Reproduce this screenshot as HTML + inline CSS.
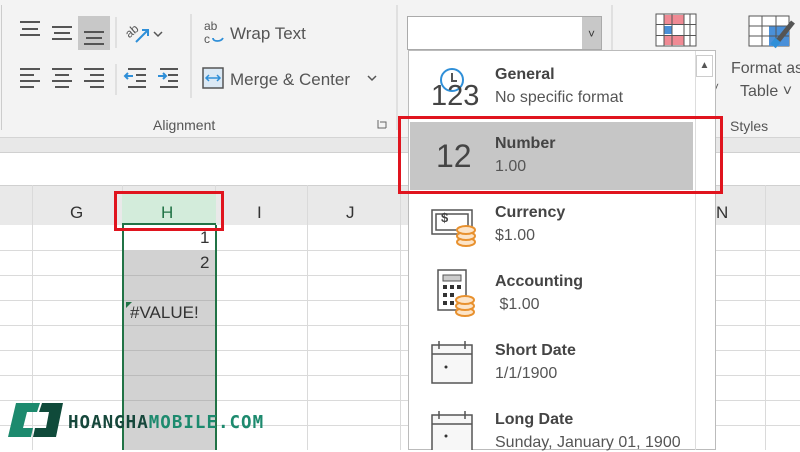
<!DOCTYPE html>
<html><head><meta charset="utf-8"><style>
*{margin:0;padding:0;box-sizing:border-box}
body{width:800px;height:450px;overflow:hidden;position:relative;background:#fff;font-family:"Liberation Sans",sans-serif;color:#333}
.a{position:absolute}
.ic{stroke:#555;stroke-width:2;fill:none}
.hl{position:absolute;height:1px;background:#dadada;left:0;width:800px}
.vl{position:absolute;width:1px;background:#dadada;top:185px;height:265px}
.it{position:absolute;left:495px;font-size:16px;color:#555}
.it b{display:block;color:#444;font-size:16px;margin-bottom:5px}
</style></head><body>
<!-- ribbon -->
<div class="a" style="left:0;top:0;width:800px;height:137px;background:#f3f3f3"></div>
<div class="a" style="left:0;top:137px;width:800px;height:1px;background:#d4d4d4"></div>
<div class="a" style="left:0;top:138px;width:800px;height:14px;background:#e8e8e8"></div>
<div class="a" style="left:0;top:152px;width:800px;height:1px;background:#d0d0d0"></div>
<div class="a" style="left:0;top:185px;width:800px;height:40px;background:#e9e9e9;border-top:1px solid #d0d0d0"></div>
<div class="a" style="left:1px;top:5px;width:1px;height:125px;background:#ccc"></div>
<!-- alignment icons -->
<div class="a" style="left:78px;top:16px;width:32px;height:34px;background:#c8c8c8"></div>
<svg class="a" style="left:0;top:0" width="400" height="137">
<g class="ic">
<path d="M20 22h20M22 29h16M20 35h20"/>
<path d="M52 27h20M54 33h16M52 39h20"/>
<path d="M84 32h20M86 38h16M84 44h20"/>
<path d="M20 69h20M20 75h14M20 81h20M20 87h14"/>
<path d="M52 69h20M55 75h14M52 81h20M55 87h14"/>
<path d="M84 69h20M90 75h14M84 81h20M90 87h14"/>
<path d="M128 69h18M136 75h10M136 81h10M128 87h18"/>
<path d="M160 69h18M168 75h10M168 81h10M160 87h18"/>
<path d="M154 32l4 4 4-4" stroke-width="1.5"/>
<path d="M368 76l4 4 4-4" stroke-width="1.5"/>
</g>
<path d="M125 76h8M128 73l-3 3 3 3" stroke="#2f8fd8" stroke-width="2" fill="none"/>
<path d="M158 76h8M163 73l3 3-3 3" stroke="#2f8fd8" stroke-width="2" fill="none"/>
<path d="M136 42l12-12M142 30h6v6" stroke="#2f8fd8" stroke-width="2" fill="none"/>
<text x="124" y="36" font-size="12" fill="#555" transform="rotate(-40 130 30)">ab</text>
<line x1="116" y1="17" x2="116" y2="48" stroke="#ccc"/>
<line x1="116" y1="64" x2="116" y2="95" stroke="#ccc"/>
<line x1="191" y1="14" x2="191" y2="98" stroke="#ccc"/>
<line x1="397" y1="5" x2="397" y2="130" stroke="#ccc"/>
<text x="204" y="30" font-size="12" fill="#555">ab</text>
<text x="204" y="43" font-size="12" fill="#555">c</text>
<path d="M213 38c0 4 8 4 10 0" stroke="#2f8fd8" stroke-width="1.8" fill="none"/>
<rect x="203" y="68" width="20" height="20" fill="#dbe9f5" stroke="#555" stroke-width="1.5"/>
<path d="M206 78h14M209 75l-3 3 3 3M217 75l3 3-3 3" stroke="#2f8fd8" stroke-width="1.5" fill="none"/>
<path d="M380 122h6v6M378 120v8h8" stroke="#666" fill="none"/>
</svg>
<div class="a" style="left:230px;top:24px;font-size:17px;color:#555">Wrap Text</div>
<div class="a" style="left:230px;top:70px;font-size:17px;color:#555">Merge &amp; Center</div>
<div class="a" style="left:153px;top:117px;font-size:14px;color:#555">Alignment</div>
<!-- right ribbon -->
<svg class="a" style="left:600px;top:0" width="200" height="137">
<line x1="12" y1="5" x2="12" y2="110" stroke="#ccc"/>
<g transform="translate(56,14)">
<rect x="0" y="0" width="40" height="32" fill="#fff" stroke="#555"/>
<rect x="8" y="1" width="20" height="9" fill="#f08a94"/><rect x="8" y="12" width="8" height="8" fill="#4a90d9"/><rect x="8" y="22" width="20" height="9" fill="#f08a94"/>
<path d="M0 10.5h40M0 21.5h40M8 0v32M28 0v32M34 0v32M16 0v32" stroke="#555" stroke-width="1"/>
</g>
<g transform="translate(149,16)">
<rect x="0" y="0" width="40" height="30" fill="#fff" stroke="#555"/>
<rect x="20" y="10" width="20" height="20" fill="#4a90d9"/>
<path d="M0 10h40M0 20h40M13 0v30M27 0v30" stroke="#555"/>
<path d="M44 6L28 26" stroke="#555" stroke-width="5"/><path d="M24 30l5-6" stroke="#2f8fd8" stroke-width="7"/>
</g>
</svg>
<div class="a" style="left:731px;top:60px;font-size:16px;color:#555;white-space:nowrap">Format as</div>
<div class="a" style="left:740px;top:83px;font-size:16px;color:#555">Table ˅</div>
<div class="a" style="left:730px;top:118px;font-size:14px;color:#555">Styles</div>
<div class="a" style="left:712px;top:80px;font-size:12px;color:#555">˅</div>
<!-- grid -->
<div class="hl" style="top:250px"></div><div class="hl" style="top:275px"></div><div class="hl" style="top:300px"></div><div class="hl" style="top:325px"></div><div class="hl" style="top:350px"></div><div class="hl" style="top:375px"></div><div class="hl" style="top:400px"></div><div class="hl" style="top:425px"></div>
<div class="vl" style="left:32px"></div><div class="vl" style="left:122px"></div><div class="vl" style="left:215px"></div><div class="vl" style="left:307px"></div><div class="vl" style="left:400px"></div><div class="vl" style="left:765px"></div>
<div class="a" style="left:122px;top:250px;width:94px;height:200px;background:#d2d2d2"></div>
<div class="hl" style="top:275px;left:122px;width:94px;background:#bbb"></div><div class="hl" style="top:300px;left:122px;width:94px;background:#bbb"></div><div class="hl" style="top:325px;left:122px;width:94px;background:#bbb"></div><div class="hl" style="top:350px;left:122px;width:94px;background:#bbb"></div><div class="hl" style="top:375px;left:122px;width:94px;background:#bbb"></div><div class="hl" style="top:400px;left:122px;width:94px;background:#bbb"></div>
<div class="a" style="left:122px;top:193px;width:94px;height:32px;background:#d3ecdb;border-bottom:2px solid #217346"></div>
<div class="a" style="left:122px;top:225px;width:95px;height:225px;border-left:2px solid #217346;border-right:2px solid #217346"></div>
<div class="a" style="left:126px;top:302px;width:0;height:0;border-top:6px solid #217346;border-right:6px solid transparent"></div>
<div class="a" style="left:70px;top:203px;font-size:17px">G</div>
<div class="a" style="left:161px;top:203px;font-size:17px;color:#217346">H</div>
<div class="a" style="left:257px;top:203px;font-size:17px">I</div>
<div class="a" style="left:346px;top:203px;font-size:17px">J</div>
<div class="a" style="left:716px;top:203px;font-size:17px">N</div>
<div class="a" style="left:200px;top:228px;font-size:17px">1</div>
<div class="a" style="left:200px;top:253px;font-size:17px">2</div>
<div class="a" style="left:130px;top:303px;font-size:17px">#VALUE!</div>
<div class="a" style="left:114px;top:191px;width:110px;height:40px;border:3px solid #e0141e"></div>
<!-- dropdown -->
<div class="a" style="left:407px;top:16px;width:195px;height:34px;background:#fff;border:1px solid #aaa"></div>
<div class="a" style="left:582px;top:17px;width:19px;height:32px;background:#c8c8c8;text-align:center;font-size:12px;line-height:34px;color:#333">˅</div>
<div class="a" style="left:408px;top:50px;width:308px;height:400px;background:#fff;border:1px solid #bbb"></div>
<div class="a" style="left:695px;top:51px;width:20px;height:399px;border-left:1px solid #ddd"></div>
<div class="a" style="left:696px;top:55px;width:17px;height:22px;border:1px solid #ccc;text-align:center;font-size:10px;line-height:20px;color:#555">▲</div>
<div class="a" style="left:410px;top:122px;width:283px;height:68px;background:#c6c6c6"></div>
<div class="a" style="left:398px;top:116px;width:325px;height:78px;border:3px solid #e0141e"></div>
<svg class="a" style="left:408px;top:50px" width="100" height="400">
<circle cx="44" cy="30" r="11" stroke="#2f8fd8" stroke-width="2" fill="none"/>
<path d="M44 23v8h5" stroke="#555" stroke-width="2" fill="#fff"/>
<g transform="translate(24,150)" fill="#fff" stroke="#555" stroke-width="1.5">
<rect x="0" y="10" width="40" height="24"/><rect x="4" y="14" width="32" height="16"/>
</g>
<g fill="#fce4c8" stroke="#e8912e" stroke-width="2">
<ellipse cx="58" cy="192" rx="9" ry="4"/><ellipse cx="58" cy="186" rx="9" ry="4"/><ellipse cx="58" cy="180" rx="9" ry="4"/>
</g>
<g transform="translate(30,220)"><rect x="0" y="0" width="28" height="40" fill="#fff" stroke="#555" stroke-width="1.5"/><rect x="5" y="5" width="18" height="6" fill="#ccc" stroke="#555"/>
<g fill="#333"><rect x="5" y="15" width="4" height="4"/><rect x="12" y="15" width="4" height="4"/><rect x="19" y="15" width="4" height="4"/><rect x="5" y="23" width="4" height="4"/><rect x="12" y="23" width="4" height="4"/><rect x="5" y="31" width="4" height="4"/><rect x="12" y="31" width="4" height="4"/></g></g>
<g fill="#fce4c8" stroke="#e8912e" stroke-width="2">
<ellipse cx="57" cy="262" rx="9" ry="4"/><ellipse cx="57" cy="256" rx="9" ry="4"/><ellipse cx="57" cy="250" rx="9" ry="4"/>
</g>
<g fill="#f7f7f7" stroke="#555" stroke-width="1.5">
<rect x="24" y="295" width="40" height="38"/><path d="M24 304h40M31 291v8M57 291v8"/>
<rect x="24" y="365" width="40" height="38"/><path d="M24 374h40M31 361v8M57 361v8"/>
</g>
<circle cx="38" cy="317" r="1.5" fill="#333"/><circle cx="38" cy="386" r="1.5" fill="#333"/>
</svg>
<div class="a" style="left:431px;top:80px;font-size:29px;color:#444">123</div>
<div class="a" style="left:436px;top:138px;font-size:32px;color:#444">12</div>
<div class="a" style="left:441px;top:210px;font-size:13px;color:#444;font-weight:bold">$</div>
<div class="it" style="top:66px"><b>General</b>No specific format</div>
<div class="it" style="top:135px"><b>Number</b>1.00</div>
<div class="it" style="top:204px"><b>Currency</b>$1.00</div>
<div class="it" style="top:273px"><b>Accounting</b>&nbsp;$1.00</div>
<div class="it" style="top:342px"><b>Short Date</b>1/1/1900</div>
<div class="it" style="top:411px"><b>Long Date</b>Sunday, January 01, 1900</div>
<!-- logo -->
<svg class="a" style="left:0;top:398px" width="70" height="45">
<path d="M16 5h24l-3 9H27l-4 16h10l-2 9H8z" fill="#1d8a6e"/>
<path d="M42 5h21l-7 34H33l2-9h11l3-16H39z" fill="#0f4a3a"/>
</svg>
<div class="a" style="left:68px;top:413px;font-size:17.5px;font-weight:bold;letter-spacing:1px;font-family:'DejaVu Sans Mono','Liberation Mono',monospace"><span style="color:#16473b">HOANGHA</span><span style="color:#1d8a6e">MOBILE.COM</span></div>
</body></html>
